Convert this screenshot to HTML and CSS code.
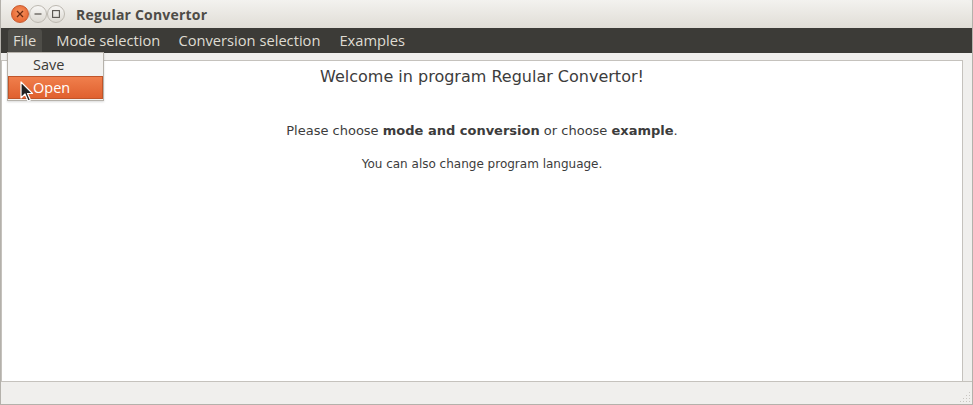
FILE: index.html
```html
<!DOCTYPE html>
<html>
<head>
<meta charset="utf-8">
<link rel="stylesheet" href="styles.css">
</head>
<body>
<div class="window">
  <div class="titlebar">
    <div class="controls">
      <span class="btn close"><svg width="8" height="8" viewBox="0 0 8 8"><path d="M1 1L7 7M7 1L1 7" stroke="#6a2a12" stroke-width="1.3"/></svg></span>
      <span class="btn"><svg width="8" height="8" viewBox="0 0 8 8"><path d="M0.5 4H7.5" stroke="#55524c" stroke-width="1.2"/></svg></span>
      <span class="btn"><svg width="8" height="8" viewBox="0 0 8 8"><rect x="0.6" y="0.6" width="6.8" height="6.8" fill="none" stroke="#55524c" stroke-width="1.1"/></svg></span>
    </div>
    <div class="title">Regular Convertor</div>
  </div>
  <div class="menubar">
    <span class="menu-item active">File</span>
    <span class="menu-item">Mode selection</span>
    <span class="menu-item">Conversion selection</span>
    <span class="menu-item">Examples</span>
  </div>
  <div class="main">
    <div class="panel">
      <div class="welcome">Welcome in program Regular Convertor!</div>
      <div class="info">Please choose <b>mode and conversion</b> or choose <b>example</b>.</div>
      <div class="info second">You can also change program language.</div>
    </div>
  </div>
  <div class="statusbar">
    <svg class="grip" width="12" height="12" viewBox="0 0 12 12">
      <g fill="#c9c6c1">
        <rect x="10" y="1" width="1" height="1"/>
        <rect x="7" y="4" width="1" height="1"/><rect x="10" y="4" width="1" height="1"/>
        <rect x="4" y="7" width="1" height="1"/><rect x="7" y="7" width="1" height="1"/><rect x="10" y="7" width="1" height="1"/>
        <rect x="1" y="10" width="1" height="1"/><rect x="4" y="10" width="1" height="1"/><rect x="7" y="10" width="1" height="1"/><rect x="10" y="10" width="1" height="1"/>
      </g>
    </svg>
  </div>
  <div class="dropdown">
    <div class="dd-item">Save</div>
    <div class="dd-item selected">Open</div>
  </div>
  <svg class="cursor" width="14" height="22" viewBox="0 0 14 22">
    <path d="M1 1L1 17L5 13L8 20L10.5 19L7.5 12.5L12.5 12.5Z" fill="#222" stroke="#fff" stroke-width="1.2" stroke-linejoin="round"/>
  </svg>
</div>
</body>
</html>
```

FILE: styles.css
```css
html, body {
  margin: 0;
  padding: 0;
}
body {
  width: 973px;
  height: 405px;
  overflow: hidden;
  background: #f0efed;
}
.window {
  position: relative;
  width: 973px;
  height: 405px;
  display: flex;
  flex-direction: column;
  box-sizing: border-box;
  border-left: 1px solid #b4b1ab;
  border-right: 1px solid #b4b1ab;
  border-bottom: 1px solid #b4b1ab;
  background: #f0efed;
}
.titlebar {
  height: 28px;
  flex: none;
  display: flex;
  align-items: center;
  background: linear-gradient(#f3f2ef, #e0ddd6);
  border-radius: 5px 5px 0 0;
  font-family: "Open Sans", "DejaVu Sans", sans-serif;
}
.controls {
  display: flex;
  margin-left: 10px;
}
.btn {
  width: 16px;
  height: 16px;
  border-radius: 50%;
  border: 1px solid #bdb9b1;
  background: linear-gradient(#f8f7f5, #dcd9d2);
  display: flex;
  align-items: center;
  justify-content: center;
}
.btn.close {
  border-color: #c85a30;
  background: radial-gradient(circle at 50% 40%, #f7935f, #e35b25);
}
.title {
  margin-left: 11px;
  font-weight: bold;
  font-size: 14px;
  color: #4e4c47;
  letter-spacing: 0.2px;
}
.menubar {
  height: 25px;
  flex: none;
  background: #3c3b37;
  display: flex;
  align-items: center;
  padding-left: 7px;
  font-family: "Open Sans", "DejaVu Sans", sans-serif;
  font-size: 14.7px;
  color: #dfdbd2;
}
.menu-item {
  padding: 0 6px 0 5px;
  margin-right: 8px;
  height: 24px;
  line-height: 23px;
  margin-top: 1px;
}
.menu-item:nth-child(2) {
  padding-left: 6px;
}
.menu-item:nth-child(3) {
  padding-left: 4px;
}
.menu-item.active {
  background: #4e4d48;
  border-radius: 3px 3px 0 0;
}
.main {
  flex: 1;
  padding: 7px 9px 0 0;
  display: flex;
}
.panel {
  flex: 1;
  background: #fff;
  border-top: 1px solid #c5c2bd;
  border-right: 1px solid #c5c2bd;
  border-left: 1px solid #c5c2bd;
  font-family: "DejaVu Sans", sans-serif;
  color: #3c3c3c;
  text-align: center;
}
.welcome {
  font-size: 16px;
  margin-top: 6px;
  line-height: 19px;
}
.info {
  font-size: 13px;
  margin-top: 37px;
  line-height: 16px;
}
.info.second {
  font-size: 12px;
  margin-top: 17px;
}
.statusbar {
  height: 22px;
  flex: none;
  border-top: 1px solid #c5c2bd;
  background: #f0efed;
  display: flex;
  justify-content: flex-end;
  align-items: flex-end;
}
.grip {
  margin: 0 1px 1px 0;
}
.dropdown {
  position: absolute;
  left: 6px;
  top: 52px;
  width: 95px;
  background: #f2f1ef;
  border: 1px solid #b6b2ab;
  box-shadow: 0 1px 2px rgba(0,0,0,0.15);
  font-family: "Open Sans", "DejaVu Sans", sans-serif;
  font-size: 14.5px;
  color: #3c3b37;
  padding-top: 1px;
}
.dd-item {
  height: 21px;
  line-height: 21px;
  padding-left: 25px;
}
.dd-item.selected {
  height: 21px;
  margin: 1px 0 1px 0;
  padding-left: 24px;
  background: linear-gradient(#f07f4c, #e0602f);
  border: 1px solid #c0552a;
  color: #fff;
}
.cursor {
  position: absolute;
  left: 19px;
  top: 81px;
}
```
